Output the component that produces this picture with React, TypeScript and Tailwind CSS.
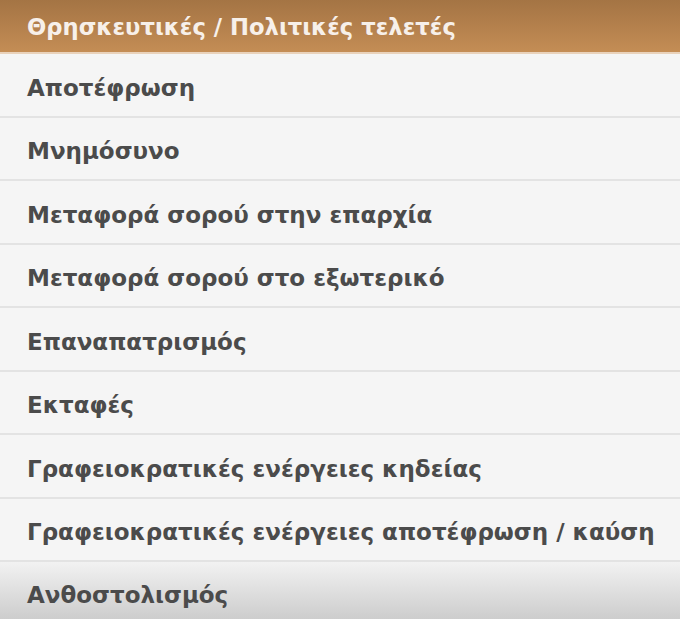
const items = [
  "Αποτέφρωση",
  "Μνημόσυνο",
  "Μεταφορά σορού στην επαρχία",
  "Μεταφορά σορού στο εξωτερικό",
  "Επαναπατρισμός",
  "Εκταφές",
  "Γραφειοκρατικές ενέργειες κηδείας",
  "Γραφειοκρατικές ενέργειες αποτέφρωση / καύση",
];

export default function App() {
  return (
    <div
      className="w-[680px] h-[619px] overflow-hidden bg-[#f5f5f5]"
      style={{ fontFamily: '"DejaVu Sans", sans-serif' }}
    >
      <div className="h-[54px] flex items-center pt-[2px] pl-[27px] bg-gradient-to-b from-[#a47444] to-[#c48d55] border-b-2 border-[#e9d2bb]">
        <span className="text-[22.7px] font-bold text-[#f7f0ea] whitespace-nowrap">
          Θρησκευτικές / Πολιτικές τελετές
        </span>
      </div>
      <ul>
        {items.map((item) => (
          <li
            key={item}
            className="h-[63.5px] flex items-center pt-[6px] pl-[27px] border-b-2 border-[#e3e3e3]"
          >
            <span className="text-[23px] font-bold text-[#4b4b4b] whitespace-nowrap">
              {item}
            </span>
          </li>
        ))}
        <li className="h-[60px] flex items-center pt-[6px] pl-[27px] bg-gradient-to-b from-[#f2f2f2] to-[#cbcbcb]">
          <span className="text-[23px] font-bold text-[#4b4b4b] whitespace-nowrap">
            Ανθοστολισμός
          </span>
        </li>
      </ul>
    </div>
  );
}
